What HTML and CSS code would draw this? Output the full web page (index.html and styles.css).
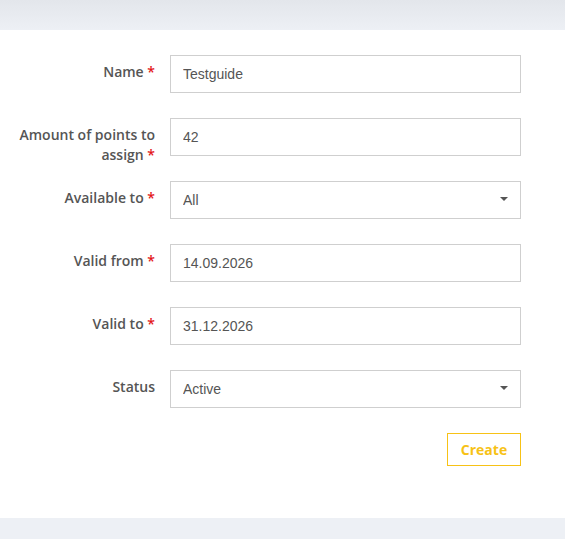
FILE: index.html
```html
<!DOCTYPE html>
<html lang="en">

<head>
    <title>New point rule</title>
    <meta charset="UTF-8">
    <meta name="viewport" content="width=device-width, initial-scale=1">
    <link rel="stylesheet" href="styles.css">
</head>

<body>
    <div class="topbar"></div>
    <div class="card">
        <form class="form">
            <div class="row">
                <label class="label">Name <span class="req">*</span></label>
                <input class="field" type="text" value="Testguide">
            </div>
            <div class="row">
                <label class="label">Amount of points to <span class="keep">assign <span class="req">*</span></span></label>
                <input class="field" type="text" value="42">
            </div>
            <div class="row">
                <label class="label">Available to <span class="req">*</span></label>
                <div class="select">
                    <select class="field">
                        <option>All</option>
                    </select>
                    <svg class="caret" width="8" height="4" viewBox="0 0 8 4"><path d="M0 0h8L4 4z" fill="#555"/></svg>
                </div>
            </div>
            <div class="row">
                <label class="label">Valid from <span class="req">*</span></label>
                <input class="field" type="text" value="14.09.2026">
            </div>
            <div class="row">
                <label class="label">Valid to <span class="req">*</span></label>
                <input class="field" type="text" value="31.12.2026">
            </div>
            <div class="row">
                <label class="label">Status</label>
                <div class="select">
                    <select class="field">
                        <option>Active</option>
                    </select>
                    <svg class="caret" width="8" height="4" viewBox="0 0 8 4"><path d="M0 0h8L4 4z" fill="#555"/></svg>
                </div>
            </div>
            <div class="actions">
                <button class="create" type="button">Create</button>
            </div>
        </form>
    </div>
    <div class="bottombar"></div>
</body>

</html>
```

FILE: styles.css
```css
body {
    margin: 0;
    background: #edf0f5;
    font-family: "Open Sans", "Liberation Sans", sans-serif;
}

.topbar {
    height: 30px;
    background: linear-gradient(#e3e6eb, #edf0f5);
}

.card {
    background: #fff;
    padding: 25px 44px 52px 0;
}

.form {
    display: flex;
    flex-direction: column;
    gap: 25px;
}

/* rows keep the input height; a long label may run below it */
.row {
    display: grid;
    grid-template-columns: 170px 1fr;
    grid-template-rows: 38px;
    align-items: start;
}

.label {
    padding: 7px 15px 0 8px;
    text-align: right;
    font-size: 14px;
    line-height: 20px;
    font-weight: 600;
    color: #555;
}

.keep {
    display: inline-block;
}

.req {
    color: #e3151a;
}

.field {
    box-sizing: border-box;
    width: 100%;
    height: 38px;
    margin: 0;
    padding: 0 12px;
    border: 1px solid #cfcfcf;
    border-radius: 0;
    background: #fff;
    font-family: "Liberation Sans", sans-serif;
    font-size: 14px;
    color: #555;
    outline: none;
    appearance: none;
}

.select {
    position: relative;
}

.caret {
    position: absolute;
    right: 13px;
    top: 16px;
    pointer-events: none;
}

.actions {
    display: flex;
    justify-content: flex-end;
}

.create {
    width: 74px;
    height: 33px;
    border: 1px solid #f7c216;
    background: #fff;
    color: #f7c216;
    font-family: "Open Sans", sans-serif;
    font-weight: 700;
    font-size: 14px;
    padding: 0;
}
```
